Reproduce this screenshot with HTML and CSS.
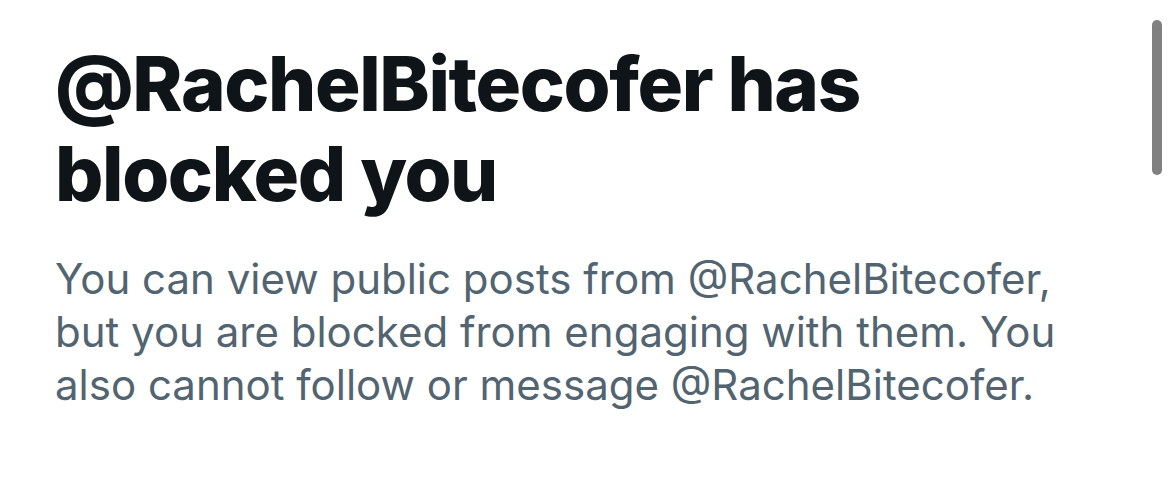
FILE: index.html
```html
<!DOCTYPE html>
<html lang="en">
<head>
<meta charset="utf-8">
<title>Blocked</title>
<link rel="stylesheet" href="styles.css">
</head>
<body>
<main class="page">
  <section class="notice">
    <h1 class="title">@RachelBitecofer has blocked you</h1>
    <p class="body">You can view public posts from @RachelBitecofer, but you are blocked from engaging with them. You also cannot follow or message @RachelBitecofer.</p>
  </section>
  <div class="scrollbar"><div class="thumb"></div></div>
</main>
</body>
</html>
```

FILE: styles.css
```css
html, body {
  margin: 0;
  padding: 0;
  background: #ffffff;
}
.page {
  position: relative;
  width: 1170px;
  height: 478px;
  overflow: hidden;
  display: flex;
}
.notice {
  padding: 38px 0 0 55px;
  width: 1010px;
}
.title {
  margin: 0;
  font-family: Inter, "Liberation Sans", sans-serif;
  font-weight: 800;
  font-size: 76px;
  line-height: 90px;
  letter-spacing: -1.4px;
  color: #0f1419;
  width: 880px;
}
.body {
  margin: 34px 0 0 0;
  font-family: Inter, "Liberation Sans", sans-serif;
  font-weight: 400;
  font-size: 42px;
  line-height: 53px;
  color: #536471;
}
.scrollbar {
  position: absolute;
  top: 20px;
  right: 8px;
  width: 10px;
  height: 155px;
}
.thumb {
  width: 100%;
  height: 100%;
  border-radius: 5px;
  background: #808080;
}
```
